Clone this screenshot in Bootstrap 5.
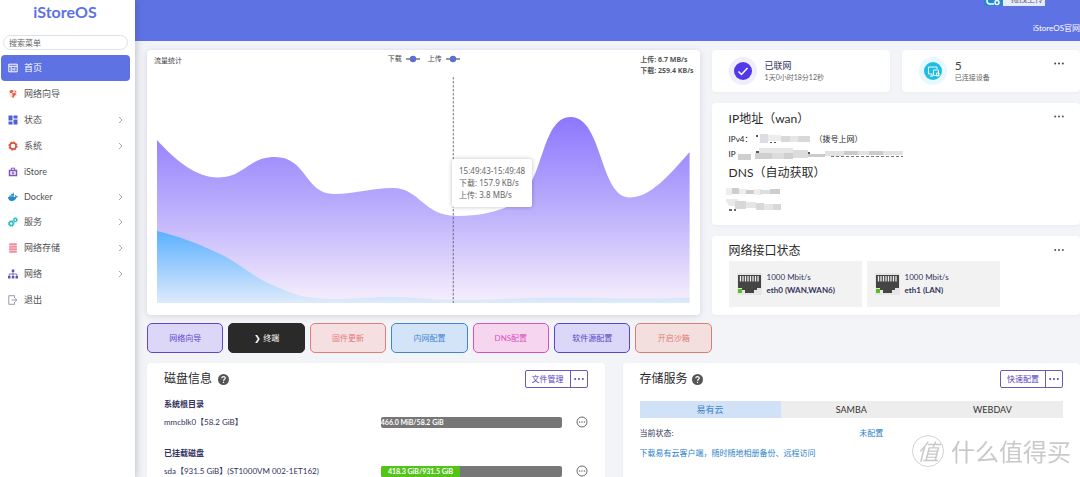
<!DOCTYPE html>
<html lang="zh-CN">
<head>
<meta charset="utf-8">
<meta name="viewport" content="width=device-width, initial-scale=1">
<title>iStoreOS</title>
<link href="https://cdn.jsdelivr.net/npm/bootstrap@5.3.0/dist/css/bootstrap.min.css" rel="stylesheet">
<style>
  body{font-family:Lato,"Noto Sans CJK SC",sans-serif;font-size:8px;line-height:12px;color:#32325d;background:#f3f4f7;min-height:100vh;overflow:hidden}
  a{text-decoration:none;color:inherit}
  svg{flex:none;display:block}
  button{font-family:inherit}
  .side{width:135px;flex:none;background:#fff;box-shadow:0 0 8px rgba(60,60,90,.35);z-index:2}
  .brand{font:700 16px/18px "Lato",sans-serif;color:#5e72e4;padding:3px 5px 0 0;height:35px;text-align:center}
  .search{width:125px;height:15px;margin:0 0 5px 3px;border:1px solid #dfe1e8;border-radius:8px;font-size:8px;line-height:12px;padding:0 5px;outline:0;color:#555}
  .search::placeholder{color:#666}
  .item{display:flex;align-items:center;height:26px;margin:0 5px 0 1px;padding:0 7px;gap:6px;font-size:9px;color:#525252;border-radius:4px}
  .item.latin{height:25px}
  .item.current{background:#5e72e4;color:#fff}
  .item .chev{margin-left:auto}
  .ico{width:10px;height:10px}
  .top{height:41px;background:#5e72e4;color:#fff}
  .top-link{padding-top:22px}
  .drop{position:absolute;top:-8px;right:35px;height:14px;width:61px;background:#e9ebf9;color:#4d5b80;line-height:14px;font-size:8px}
  .drop .cloud{width:19px;height:14px;background:#2588d4}
  .main{padding:9px 0 0 12px}
  .two{display:grid;grid-template-columns:3fr 2fr;gap:12px}
  .pane{background:#fff;border-radius:4px;box-shadow:0 1px 3px rgba(90,100,140,.06)}
  .chart{padding:0 10px 12px;position:relative;box-shadow:0 1px 6px rgba(90,100,140,.22)}
  .chart-head{height:27px;margin:0 -4px 0 -3px;font:7px/10px "Noto Sans","Noto Sans CJK SC",sans-serif;color:#444;display:grid;grid-template-columns:1fr auto 1fr}
  .chart-title{padding-top:6px}
  .chart svg.plot{width:100%;height:226px}
  .rates{font-weight:700;line-height:11px;padding:4px 0 0;color:#555}
  .tip{position:absolute;left:55.2%;top:109px;background:#fff;border-radius:2px;box-shadow:0 0 4px rgba(0,0,0,.25);padding:6px 7px;font:8px/12px "Noto Sans","Noto Sans CJK SC",sans-serif;color:#666;white-space:nowrap}
  .right{display:grid;grid-template-rows:42px 122px 79px;gap:11px}
  .stat{gap:8px;padding-left:17px}
  .big{font-size:9px;color:#32325d}
  .grey{color:#666;font-size:7px;line-height:10px}
  .dots{border:0;background:none;padding:0;line-height:1}
  .h{font-size:12px;line-height:16px;color:#2a2a2a;font-weight:400;margin:0}
  .ink{color:#222}
  .port{background:#f2f2f2;width:133px;height:46px;padding-left:8px;gap:5px;line-height:13px}
  .quick{width:calc(60% + 5px);margin-top:8px;gap:5px}
  .quick button{flex:1;height:30px;border:1px solid;border-radius:5px;font-size:8px;padding:0;white-space:nowrap}
  .q1{color:#6344d0;background:#dcd6f7}.q2{color:#fff;background:#2a2a2a;border-color:#2a2a2a!important}
  .q3{color:#e47a7a;background:#f6dfe0}.q4{color:#3f86cb;background:#d3e4f8}
  .q5{color:#dc4fc0;background:#f6d6ef}.q6{color:#5a45c8;background:#dbd7f8}.q7{color:#dd7c74;background:#f4dfdf}
  .lower{display:grid;grid-template-columns:1fr 1fr;gap:18px;margin-top:10px}
  .lower .pane{padding:7px 17px 0;border-radius:4px 4px 0 0}
  .split{border:1px solid #6b5bb5;border-radius:2px;height:18px}
  .split button{border:0;background:none;color:#5a3fc0;font-size:8px;line-height:16px;padding:0 6px}
  .split button+button{border-left:1px solid #6b5bb5;padding:0 3px}
  .disk{display:grid;grid-template-columns:6fr 5fr 26px;align-items:center;height:14px}
  .meter{height:11px;background:#777;border-radius:2px;overflow:hidden;color:#fff;font-size:7px;font-weight:700;line-height:11px;white-space:nowrap}
  .meter div{height:100%;background:#52c41a;text-align:center}
  .meter .low{background:none}
  .tabs{display:grid;grid-template-columns:1fr 1fr 1fr;margin-top:13px}
  .tabs button{border:0;background:#ededed;height:17px;font-size:9px;line-height:17px;padding:0;color:#333}
  .tabs button.on{background:#d0e1f8;color:#3a82c8}
  .blue{color:#2b7fc8}
  .mark-wm{position:fixed;right:9px;bottom:9px;font:24px/34px "Noto Sans CJK SC",sans-serif;color:#c9c9c9;gap:7px;pointer-events:none}
  .mark-wm b{width:32px;height:32px;border:1px solid #d2d2d2;border-radius:50%;font-weight:400;font-style:italic;font-size:22px;line-height:28px;text-align:center}
</style>
</head>
<body class="d-flex">
<nav class="side d-flex flex-column">
  <a href="#" class="brand">iStoreOS</a>
  <input class="search" type="text" placeholder="搜索菜单" aria-label="搜索菜单">
  <a href="#" class="item current"><svg class="ico" viewBox="0 0 10 10" fill="none" stroke="#fff"><path d="M.8 1.2h8.4v7.6H.8zM1 3.3h8M3.2 3.5v5M5 5v2.5M6.8 4.5v3"/></svg>首页</a>
  <a href="#" class="item"><svg class="ico" viewBox="0 0 10 10"><circle cx="5" cy="5" r="4" fill="#fbe2dd"/><path d="M1.500 2 4 .8l1.500 1.500-1.800 2-1.700-.5zM4 4.500l3.200-.7.800 1.700-2 1.500L5.300 9.300 4 7.500l.8-1.500zM6.300 1l2.400 1.800-1.500.7z" fill="#dc5a48"/></svg>网络向导</a>
  <a href="#" class="item"><svg class="ico" viewBox="0 0 10 10" fill="#5061cf"><path d="M.5.5h4v5h-4zM.5 6.500h4v3h-4zM5.500.5h4v3h-4zM5.500 4.500h4v5h-4z"/></svg>状态<svg class="chev" width="5" height="8" viewBox="0 0 5 8" fill="none" stroke="#aaa"><path d="M1 1l3 3-3 3"/></svg></a>
  <a href="#" class="item"><svg class="ico" viewBox="0 0 10 10" fill="none" stroke="#d8553f"><circle cx="5" cy="5" r="3.100" stroke-width="1.700"/><circle cx="5" cy="5" r="4.200" stroke-width="1" stroke-dasharray="1.650 1.650"/></svg>系统<svg class="chev" width="5" height="8" viewBox="0 0 5 8" fill="none" stroke="#aaa"><path d="M1 1l3 3-3 3"/></svg></a>
  <a href="#" class="item latin"><svg class="ico" viewBox="0 0 10 10" fill="none" stroke="#7c55bd"><path d="M1.500 3.500h7v5h-7z" stroke-width="1.500"/><path d="M3.300 3V1.200h3.400V3M5 4.500v3M3.500 6h3"/></svg>iStore</a>
  <a href="#" class="item latin"><svg class="ico" viewBox="0 0 10 10" fill="#2389d0"><path d="M0 5h7.200c.2-1-.1-1.600.3-2.200.7.4.9.9.9 1.400h1.500C9.700 5.300 9 5.500 8.300 5.700 7.500 7.900 5.800 9 3.600 9 1.500 9 .2 7.500 0 5zM1.300 3.500h4.800v1.200H1.300zM3 2h3v1.200H3zM4.700.7H6v1H4.700z"/></svg>Docker<svg class="chev" width="5" height="8" viewBox="0 0 5 8" fill="none" stroke="#aaa"><path d="M1 1l3 3-3 3"/></svg></a>
  <a href="#" class="item"><svg class="ico" viewBox="0 0 10 10" fill="none" stroke="#1fb9c6"><circle cx="3.200" cy="6.600" r="2" stroke-width="1.500"/><circle cx="7.300" cy="2.900" r="1.500" stroke-width="1.300"/><circle cx="3.200" cy="6.600" r="2.900" stroke-width=".7" stroke-dasharray="1.200 1.100"/><circle cx="7.300" cy="2.900" r="2.300" stroke-width=".6" stroke-dasharray="1 .8"/></svg>服务<svg class="chev" width="5" height="8" viewBox="0 0 5 8" fill="none" stroke="#aaa"><path d="M1 1l3 3-3 3"/></svg></a>
  <a href="#" class="item"><svg class="ico" viewBox="0 0 10 10" fill="#f08f9f"><rect x="1" y=".3" width="8" height="2.200" rx="1"/><rect x="1" y="2.900" width="8" height="1.800" rx=".6"/><rect x="1" y="5.200" width="8" height="1.800" rx=".6"/><rect x="1" y="7.500" width="8" height="2.200" rx="1"/></svg>网络存储<svg class="chev" width="5" height="8" viewBox="0 0 5 8" fill="none" stroke="#aaa"><path d="M1 1l3 3-3 3"/></svg></a>
  <a href="#" class="item"><svg class="ico" viewBox="0 0 10 10" fill="#6250b4"><path d="M3.800.5h2.500v2.500H3.800zM0 7h2.500v2.500H0zM3.800 7h2.500v2.500H3.800zM7.500 7H10v2.500H7.500z"/><path d="M5 3v4M1.200 7V5h7.600v2" fill="none" stroke="#6250b4" stroke-width=".8"/></svg>网络<svg class="chev" width="5" height="8" viewBox="0 0 5 8" fill="none" stroke="#aaa"><path d="M1 1l3 3-3 3"/></svg></a>
  <a href="#" class="item"><svg class="ico" viewBox="0 0 10 10" fill="none" stroke="#8a93a0"><path d="M6.500 3V.7H.8v8.600h5.700V7M3.500 5h5M7 3.300 8.900 5 7 6.700" stroke-width=".9"/></svg>退出</a>
</nav>

<div class="flex-grow-1 d-flex flex-column" style="min-width:0">
  <header class="top position-relative d-flex justify-content-end">
    <div class="drop d-flex"><span class="cloud"><svg width="19" height="14" viewBox="0 0 19 14" fill="none" stroke="#fff" stroke-width="1.500"><path d="M10 12H6a3 3 0 0 1 0-6 4 4 0 0 1 7-1"/><circle cx="13" cy="10.500" r="2"/></svg></span><span class="ps-1 ms-1">拖拽上传</span></div>
    <a href="#" class="text-nowrap top-link">iStoreOS官网</a>
  </header>

  <main class="main flex-grow-1 d-flex flex-column">
    <div class="two">
      <section class="pane chart">
        <div class="chart-head">
          <span class="chart-title">流量统计</span>
          <span class="d-flex gap-2 pt-1">
            <span class="d-flex align-items-start gap-1">下载<svg width="14" height="10" viewBox="0 0 14 10"><path d="M0 5h14" stroke="#333"/><circle cx="7" cy="5" r="3.200" fill="#5b6fd6"/></svg></span>
            <span class="d-flex align-items-start gap-1">上传<svg width="14" height="10" viewBox="0 0 14 10"><path d="M0 5h14" stroke="#333"/><circle cx="7" cy="5" r="3.200" fill="#5b6fd6"/></svg></span>
          </span>
          <span class="rates ms-auto">上传: 6.7 MB/s<br>下载: 259.4 KB/s</span>
        </div>
        <svg class="plot" viewBox="157 77 533 226" preserveAspectRatio="none">
          <defs>
            <linearGradient id="up" x1="0" y1="0" x2="0" y2="1"><stop stop-color="#8d77fd"/><stop offset=".5" stop-color="#bcaffc"/><stop offset="1" stop-color="#f6effc"/></linearGradient>
            <linearGradient id="down" x1="0" y1="0" x2="0" y2="1"><stop stop-color="#5bb0ff"/><stop offset="1" stop-color="#deebfb"/></linearGradient>
          </defs>
          <path fill="url(#up)" d="M157 140C175 160 196 177.500 218 177.500C245 177.500 248 157 275 157C307 157 305 194 334 194C357 194 370 188 393 188C420 188 423 216 458 216C480 216 497 212 512 205C545 188 540 117 571 117C603 117 600 197.500 630 197.500C650 197.500 668 177 690 152V303H157z"/>
          <path fill="url(#down)" d="M157 231C178 236 197 243 218 253C240 263 252 277 275 286C290 292 300 299 334 299C357 299 370 297 393 297C415 297 430 300 453 300C490 300 520 298 550 297.500C590 297 640 300 690 297.500V303H157z"/>
          <path d="M453.500 77V303" stroke="#555" stroke-width=".8" stroke-dasharray="2.500 1.500"/>
        </svg>
        <div class="tip">15:49:43-15:49:48<br>下载: 157.9 KB/s<br>上传: 3.8 MB/s</div>
      </section>

      <div class="right">
        <div class="d-grid" style="grid-template-columns:1fr 1fr;gap:12px">
          <div class="pane stat d-flex align-items-center"><svg width="28" height="28" viewBox="0 0 28 28"><circle cx="14" cy="14" r="14" fill="#f0edfe"/><circle cx="14" cy="14" r="9" fill="#5338e8"/><path d="M9.500 14.500l3 3 6-6.500" fill="none" stroke="#fff" stroke-width="1.500"/></svg><div><div class="big">已联网</div><div class="grey">1天0小时18分12秒</div></div></div>
          <div class="pane stat d-flex align-items-center position-relative"><svg width="28" height="28" viewBox="0 0 28 28"><circle cx="14" cy="14" r="14" fill="#e7f9fd"/><circle cx="14" cy="14" r="9" fill="#1fbce4"/><path d="M13.500 17h-4V10h8.500v2M11 19.200h3M13 17v2M14.500 13h5v5.500h-5zM17.500 16h2.500v3h-2.500z" fill="none" stroke="#fff" stroke-width=".9"/></svg><div><div style="font-size:12px;color:#444">5</div><div class="grey">已连接设备</div></div>
            <button class="dots position-absolute top-0 end-0 mt-2 me-3" aria-label="更多"><svg width="10" height="10" viewBox="0 0 10 10" fill="#444"><circle cx="1.200" cy="5.500" r="1"/><circle cx="5" cy="5.500" r="1"/><circle cx="8.800" cy="5.500" r="1"/></svg></button></div>
        </div>
        <section class="pane" style="padding:8px 16px 0 17px">
          <div class="d-flex justify-content-between"><h2 class="h">IP地址（wan）</h2><button class="dots mb-2" aria-label="更多"><svg width="10" height="10" viewBox="0 0 10 10" fill="#555"><circle cx="1.200" cy="5.500" r="1"/><circle cx="5" cy="5.500" r="1"/><circle cx="8.800" cy="5.500" r="1"/></svg></button></div>
          <div class="ink d-flex align-items-center" style="height:14px;margin-top:3px;gap:4px">IPv4：<svg width="54" height="10" viewBox="0 0 54 10"><path d="M0 1h2v2H0z" fill="#555"/><path d="M4 0h8v9H4z" fill="#dcdce4"/><path d="M12 1h13v6H12z" fill="#ededee"/><path d="M25 2h9v6h-9zM42 2h12v6H42z" fill="#d8d8d9"/><path d="M34 2h8v6h-8z" fill="#e6e6e7"/><path d="M14 8h2v1h-2zM18 8h2v1h-2z" fill="#555"/></svg>（拨号上网）</div>
          <div class="ink d-flex align-items-center" style="height:15px;gap:2px">IP<svg width="167" height="14" viewBox="0 0 165 14"><path d="M3 8h5v1H3zM17 4h3v2h-3zM69 5h2v3h-2z" fill="#555"/><path d="M-1 7h13v6H-1z" fill="#cfcfcf"/><path d="M20 1h34v5H20z" fill="#e6e6e6"/><path d="M16 6h17v6H16zM45 6h9v6h-9z" fill="#cfcfcf"/><path d="M33 6h12v6H33zM54 3h15v8H54z" fill="#dcdcdc"/><path d="M69 7h17v3H69zM105 4h14v4h-14zM130 4h14v4h-14z" fill="#cbcbcb"/><path d="M86 4h19v5H86zM119 4h11v4h-11zM144 4h20v4h-20z" fill="#e2e2e2"/><path d="M92 9.500h72" stroke="#777" stroke-dasharray="3 2"/></svg></div>
          <h2 class="h" style="margin-top:4px">DNS（自动获取）</h2>
          <svg class="d-block" style="margin:5px 0 0 -3px" width="57" height="28" viewBox="0 0 57 28"><path d="M0 2h6v7H0zM13 3h8v5h-8zM28 3h8v6h-8z" fill="#ededed"/><path d="M6 2h7v6H6zM20 4h8v4h-8zM44 3h10v5H44z" fill="#cdcdcd"/><path d="M34 4h10v4H34z" fill="#dedede"/><path d="M-1 13h13v7H3z" fill="#eaeaea"/><path d="M9 15h11v8H9zM30 17h8v7h-8zM47 18h8v6h-8z" fill="#d8d8d8"/><path d="M20 16h10v6H20zM38 18h9v6h-9z" fill="#e5e5e5"/><path d="M3 23h3v2H3zM8 23h2v2H8z" fill="#666"/></svg>
        </section>
        <section class="pane" style="padding:7px 16px 0 17px">
          <div class="d-flex justify-content-between"><h2 class="h" style="margin-bottom:2px">网络接口状态</h2><button class="dots mb-1" aria-label="更多"><svg width="10" height="10" viewBox="0 0 10 10" fill="#555"><circle cx="1.200" cy="5" r="1"/><circle cx="5" cy="5" r="1"/><circle cx="8.800" cy="5" r="1"/></svg></button></div>
          <div class="d-flex" style="gap:5px">
            <div class="port d-flex align-items-center"><svg width="25" height="22" viewBox="0 0 25 22"><path d="M0 0h25v22H0z" fill="#e6e6e6"/><path d="M1 2h23v13h-4v2h-3v3H8v-3H5v-2H1z" fill="#444"/><path d="M3.500 3v5.500M6 3v5.500M8.500 3v5.500M11 3v5.500M13.500 3v5.500M16 3v5.500M18.500 3v5.500M21 3v5.500" stroke="#eee" stroke-width="1.300"/><path d="M1 16h4v4H1z" fill="#52c41a"/></svg><div>1000 Mbit/s<br><b>eth0 (WAN,WAN6)</b></div></div>
            <div class="port d-flex align-items-center"><svg width="25" height="22" viewBox="0 0 25 22"><path d="M0 0h25v22H0z" fill="#e6e6e6"/><path d="M1 2h23v13h-4v2h-3v3H8v-3H5v-2H1z" fill="#444"/><path d="M3.500 3v5.500M6 3v5.500M8.500 3v5.500M11 3v5.500M13.500 3v5.500M16 3v5.500M18.500 3v5.500M21 3v5.500" stroke="#eee" stroke-width="1.300"/><path d="M1 16h4v4H1z" fill="#52c41a"/></svg><div>1000 Mbit/s<br><b>eth1 (LAN)</b></div></div>
          </div>
        </section>
      </div>
    </div>

    <div class="quick d-flex">
      <button class="q1">网络向导</button><button class="q2">❯ 终端</button><button class="q3">固件更新</button><button class="q4">内网配置</button><button class="q5">DNS配置</button><button class="q6">软件源配置</button><button class="q7">开启沙箱</button>
    </div>

    <div class="lower flex-grow-1">
      <section class="pane">
        <div class="d-flex justify-content-between align-items-center"><h2 class="h d-flex align-items-center" style="gap:6px">磁盘信息<svg width="11" height="11" viewBox="0 0 11 11"><circle cx="5.500" cy="5.500" r="5.500" fill="#555"/><path d="M3.800 4.300c0-2.400 3.500-2.200 3.400 0 0 1.200-1.700 1.200-1.700 2.500M5.500 7.800v1.200" fill="none" stroke="#fff" stroke-width="1.200"/></svg></h2>
          <div class="split d-flex"><button>文件管理</button><button aria-label="更多"><svg width="10" height="4" viewBox="0 0 10 4" fill="#5a3fc0"><circle cx="1.200" cy="2" r="1"/><circle cx="5" cy="2" r="1"/><circle cx="8.800" cy="2" r="1"/></svg></button></div></div>
        <div class="fw-bold" style="margin-top:10px">系统根目录</div>
        <div class="disk" style="margin-top:5px"><span>mmcblk0【58.2 GiB】</span><div class="meter"><div class="low" style="width:1%">466.0 MiB/58.2 GiB</div></div><button class="dots ms-auto" aria-label="更多"><svg width="12" height="12" viewBox="0 0 12 12"><circle cx="6" cy="6" r="5" fill="none" stroke="#444" stroke-width=".8"/><path d="M3 6h1.200M5.400 6h1.200M7.800 6H9" stroke="#444" stroke-width="1.200"/></svg></button></div>
        <div class="fw-bold" style="margin-top:18px">已挂载磁盘</div>
        <div class="disk" style="margin-top:5px"><span>sda【931.5 GiB】(ST1000VM 002-1ET162)</span><div class="meter"><div style="width:44%">418.3 GiB/931.5 GiB</div></div><button class="dots ms-auto" aria-label="更多"><svg width="12" height="12" viewBox="0 0 12 12"><circle cx="6" cy="6" r="5" fill="none" stroke="#444" stroke-width=".8"/><path d="M3 6h1.200M5.400 6h1.200M7.800 6H9" stroke="#444" stroke-width="1.200"/></svg></button></div>
      </section>
      <section class="pane">
        <div class="d-flex justify-content-between align-items-center"><h2 class="h d-flex align-items-center gap-1">存储服务<svg width="11" height="11" viewBox="0 0 11 11"><circle cx="5.500" cy="5.500" r="5.500" fill="#555"/><path d="M3.800 4.300c0-2.400 3.500-2.200 3.400 0 0 1.200-1.700 1.200-1.700 2.500M5.500 7.800v1.200" fill="none" stroke="#fff" stroke-width="1.200"/></svg></h2>
          <div class="split d-flex"><button>快速配置</button><button aria-label="更多"><svg width="10" height="4" viewBox="0 0 10 4" fill="#5a3fc0"><circle cx="1.200" cy="2" r="1"/><circle cx="5" cy="2" r="1"/><circle cx="8.800" cy="2" r="1"/></svg></button></div></div>
        <div class="tabs"><button class="on">易有云</button><button>SAMBA</button><button>WEBDAV</button></div>
        <div class="row g-0" style="margin-top:9px"><span class="col-6">当前状态:</span><a href="#" class="col-6 blue" style="padding-left:8px">未配置</a></div>
        <a href="#" class="blue d-block text-nowrap" style="margin-top:8px">下载易有云客户端，随时随地相册备份、远程访问</a>
      </section>
    </div>
  </main>
</div>
<div class="mark-wm d-flex align-items-center" aria-hidden="true"><b>值</b><span>什么值得买</span></div>
<script src="https://cdn.jsdelivr.net/npm/bootstrap@5.3.0/dist/js/bootstrap.bundle.min.js"></script>
</body>
</html>
